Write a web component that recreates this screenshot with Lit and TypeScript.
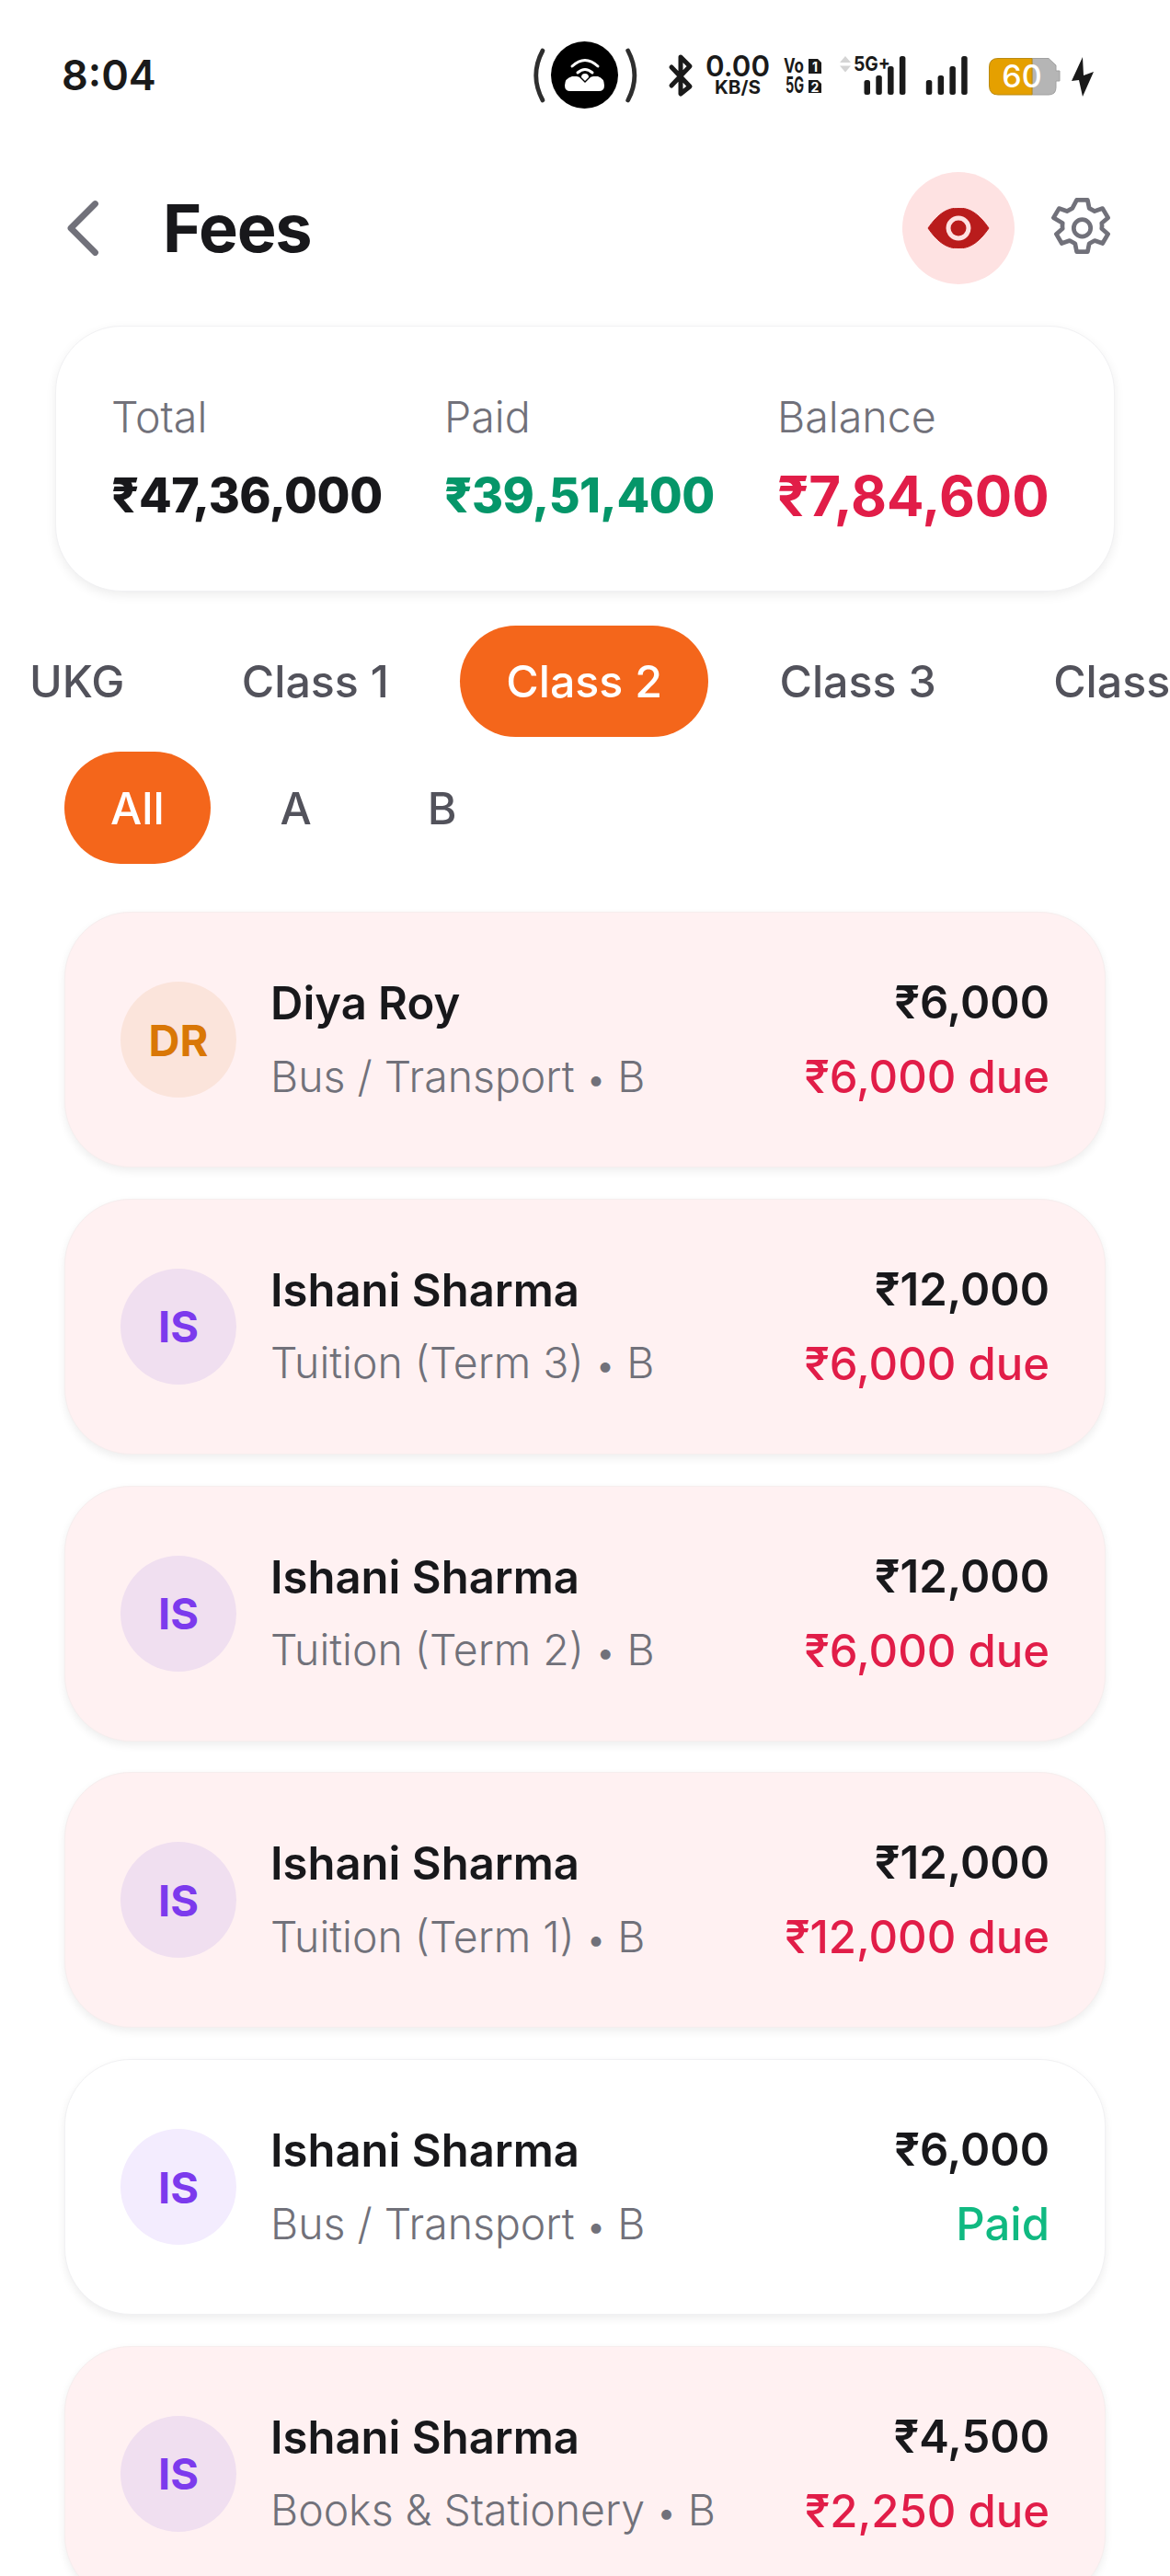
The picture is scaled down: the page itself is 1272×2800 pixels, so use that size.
import { LitElement, html, css, svg } from "lit";
import { customElement } from "lit/decorators.js";
import { classMap } from "lit/directives/class-map.js";

interface Fee { ini: string; name: string; sub: string; amt: string; due: string; paid?: boolean; tone: string }

const fees: Fee[] = [
  { ini: "DR", name: "Diya Roy", sub: "Bus / Transport", amt: "₹6,000", due: "₹6,000 due", tone: "orange" },
  { ini: "IS", name: "Ishani Sharma", sub: "Tuition (Term 3)", amt: "₹12,000", due: "₹6,000 due", tone: "violet" },
  { ini: "IS", name: "Ishani Sharma", sub: "Tuition (Term 2)", amt: "₹12,000", due: "₹6,000 due", tone: "violet" },
  { ini: "IS", name: "Ishani Sharma", sub: "Tuition (Term 1)", amt: "₹12,000", due: "₹12,000 due", tone: "violet" },
  { ini: "IS", name: "Ishani Sharma", sub: "Bus / Transport", amt: "₹6,000", due: "Paid", paid: true, tone: "violet" },
  { ini: "IS", name: "Ishani Sharma", sub: "Books & Stationery", amt: "₹4,500", due: "₹2,250 due", tone: "violet" },
];

const bars = (x: number) => {
  const tops = [87, 82, 72, 61];
  return [0, 1, 2, 3].map((i) => svg`<rect x=${x + i * 12.8} y=${tops[i]} width="6.5" height=${103 - tops[i]} rx="2.5" fill="#1a1a1a"/>`);
};

@customElement("app-root")
export class AppRoot extends LitElement {
  static styles = css`
    :host { display: block; width: 1272px; height: 2800px; overflow: hidden; background: #fff;
      font-family: Inter, "Noto Sans", sans-serif; color: #18181b; }
    .status { height: 164px; display: flex; justify-content: space-between; align-items: flex-start; }
    .time { margin: 60px 0 0 67px; font-size: 45px; line-height: 44px; font-weight: 600; color: #1a1a1a; }
    .status-icons { display: block; margin: 40px 72px 0 0; }
    .header { height: 168px; box-sizing: border-box; display: flex; align-items: center; padding: 0 60px 0 70px; }
    .back { display: block; width: 40px; height: 64px; }
    .title { margin: 0 0 0 67px; font-size: 72px; line-height: 80px; font-weight: 700; letter-spacing: -1.2px; flex: 1; }
    .eye-btn { width: 122px; height: 122px; border-radius: 50%; background: #fee2e2; display: flex; align-items: center; justify-content: center; }
    .gear { display: block; width: 71px; height: 71px; margin-left: 38px; }
    .summary { margin: 22px 60px 0; height: 289px; box-sizing: border-box; border-radius: 72px; background: #fff;
      border: 1px solid #f1f1f3; box-shadow: 0 4px 12px rgba(0,0,0,.07); display: grid; grid-template-columns: repeat(3, 362px);
      padding: 0 0 0 60px; align-content: center; }
    .sum-label { font-size: 46.6px; line-height: 60px; font-weight: 350; color: #71717a; }
    .sum-value { font-size: 52px; line-height: 72px; height: 72px; margin-top: 20px; font-weight: 800; white-space: nowrap; letter-spacing: -0.45px; }
    .green { color: #059669; }
    .red { color: #e11d48; }
    .big { font-size: 60px; font-weight: 700; letter-spacing: 0; }
    .tabs { display: flex; gap: 27.5px; margin: 37px 0 0 -18px; height: 121px; white-space: nowrap; }
    .chips { display: flex; gap: 26px; margin: 16px 0 0 70px; height: 122px; }
    .pill { display: flex; align-items: center; padding: 0 50px; border-radius: 61px; font-size: 48.3px; font-weight: 500; color: #52525b; }
    .pill.on { background: #f4661b; color: #fff; }
    .list { margin: 52px 70px 0; display: flex; flex-direction: column; gap: 33.75px; }
    .card { height: 278px; box-sizing: border-box; border-radius: 72px; background: #fff; border: 1px solid #f1f1f3;
      box-shadow: 0 4px 10px rgba(0,0,0,.07); display: flex; align-items: center; padding: 0 60px 0 60px; flex: none; }
    .card.due { background: #fff1f2; border-color: #f6eeee; }
    .avatar { width: 126px; height: 126px; border-radius: 50%; display: flex; align-items: center; justify-content: center;
      font-size: 47px; font-weight: 700; flex: none; margin-right: 37px; }
    .avatar.violet { background: #f3ecfe; color: #7c3aed; }
    .due .avatar.violet { background: #f0dff0; }
    .avatar.orange { background: #fbe4db; color: #d97706; }
    .text { flex: 1; min-width: 0; padding-top: 3.5px; }
    .name { font-size: 49px; line-height: 60px; font-weight: 600; }
    .sub { font-size: 46.4px; line-height: 60px; margin-top: 18.5px; font-weight: 350; color: #71717a; white-space: nowrap; }
    .dot { font-size: 40px; margin: 0 -1px; }
    .right { text-align: right; padding-top: 1px; }
    .amt { font-size: 49px; line-height: 60px; font-weight: 600; }
    .due-text { font-size: 49px; line-height: 60px; margin-top: 21px; font-weight: 500; color: #e11d48; white-space: nowrap; }
    .due-text.paid { color: #10b981; }
  `;

  private statusIcons() {
    return html`<svg class="status-icons" width="630" height="90" viewBox="570 40 630 90" font-family="Inter, sans-serif" fill="#1a1a1a">
      <path d="M590 55 Q575.5 82 590 109 M682.7 55 Q697 82 682.7 109" fill="none" stroke="#2e2e2e" stroke-width="4.8" stroke-linecap="round"/>
      <ellipse cx="635.5" cy="81.5" rx="36.5" ry="36.5" fill="#000"/>
      <path d="M620 99 Q614 99 614 93 Q614 85 622 83 L627 83 Q630 83 632 86 L636 90 L640 86 Q642 83 645 83 L650 83 Q657 85 657 93 Q657 99 651 99 Z" fill="#fff"/>
      <path d="M622 72 Q636 59 650 72 M628 79 Q636 72 644 79" fill="none" stroke="#fff" stroke-width="3" stroke-linecap="round"/>
      <path d="M632 84 a4 4 0 1 1 8 0 l-4 4 z" fill="#fff"/>
      <path d="M730 73 L750 94 L740 102 V62 L750 72 L730 93" fill="none" stroke="#1a1a1a" stroke-width="5" stroke-linejoin="round" stroke-linecap="round"/>
      <text x="767" y="83" font-size="31" font-weight="600" textLength="70" lengthAdjust="spacingAndGlyphs">0.00</text>
      <text x="777" y="102" font-size="19.5" font-weight="700" textLength="50" lengthAdjust="spacingAndGlyphs">KB/S</text>
      <text x="852" y="79" font-size="21" font-weight="700" textLength="22" lengthAdjust="spacingAndGlyphs">Vo</text>
      <text x="854" y="101" font-size="24" font-weight="700" textLength="20" lengthAdjust="spacingAndGlyphs">5G</text>
      <path d="M879 64 H889 L893 68 V80 H879 Z"/><path d="M879 87 H889 L893 91 V101 H879 Z"/>
      <text x="886" y="78" font-size="14" font-weight="700" fill="#fff" text-anchor="middle">1</text>
      <text x="886" y="99.5" font-size="14" font-weight="700" fill="#fff" text-anchor="middle">2</text>
      <path d="M919 61 l6 7 h-12 z" fill="#d4d4d4"/><path d="M919 78.5 l6 -7 h-12 z" fill="#d4d4d4"/>
      <text x="928" y="77" font-size="22" font-weight="700" textLength="40" lengthAdjust="spacingAndGlyphs">5G+</text>
      ${bars(939.5)}
      ${bars(1006.8)}
      <path d="M1122 63.5 H1140 L1148 71 V77 H1152 V88 H1148 V95 Q1148 103 1140 103 H1122 Z" fill="#b5b5b5" stroke="#a0a0a0" stroke-width="1"/>
      <path d="M1122 63.5 H1085 Q1075.5 63.5 1075.5 73 V93 Q1075.5 103 1085 103 H1122 Z" fill="#e5a000" stroke="#b98a12" stroke-width="1"/>
      <text x="1111" y="95" font-size="34" font-weight="500" fill="#fff" text-anchor="middle">60</text>
      <path d="M1177 62 L1165 88 L1173 87 L1177 105 L1189 78 L1178 82 Z"/>
    </svg>`;
  }

  render() {
    return html`
      <div class="status"><div class="time">8:04</div>${this.statusIcons()}</div>
      <div class="header">
        <svg class="back" viewBox="0 0 40 64"><path d="M33.5 5.5 L7 32 L33.5 58.5" fill="none" stroke="#71717a" stroke-width="6.8" stroke-linecap="round" stroke-linejoin="round"/></svg>
        <h1 class="title">Fees</h1>
        <div class="eye-btn">
          <svg width="68" height="44" viewBox="0 0 68 44">
            <path d="M1 22 C12 6 22 0 34 0 C46 0 56 6 67 22 C56 38 46 44 34 44 C22 44 12 38 1 22 Z" fill="#b91c1c" stroke="#b91c1c" stroke-linejoin="round"/>
            <circle cx="34" cy="22" r="11" fill="#b91c1c" stroke="#fee2e2" stroke-width="5"/>
          </svg>
        </div>
        <svg class="gear" viewBox="0 0 24 24" fill="none" stroke="#71717a" stroke-width="1.6" stroke-linejoin="round">
          <path d="M10 1.5h4l.6 3 2 1.1 2.9-1 2 3.4-2.3 2c.1.7.1 1.3 0 2l2.3 2-2 3.4-2.9-1-2 1.1-.6 3h-4l-.6-3-2-1.1-2.9 1-2-3.4 2.3-2c-.1-.7-.1-1.3 0-2L1.5 8l2-3.4 2.9 1 2-1.1z"/>
          <circle cx="12" cy="11.8" r="3.1"/>
        </svg>
      </div>
      <div class="summary">
        <div><div class="sum-label">Total</div><div class="sum-value">₹47,36,000</div></div>
        <div><div class="sum-label">Paid</div><div class="sum-value green">₹39,51,400</div></div>
        <div><div class="sum-label">Balance</div><div class="sum-value red big">₹7,84,600</div></div>
      </div>
      <div class="tabs">
        ${["UKG", "Class 1", "Class 2", "Class 3", "Class 4"].map((t) => html`<div class=${classMap({ pill: true, on: t === "Class 2" })}>${t}</div>`)}
      </div>
      <div class="chips">
        ${["All", "A", "B"].map((t) => html`<div class=${classMap({ pill: true, on: t === "All" })}>${t}</div>`)}
      </div>
      <div class="list">
        ${fees.map((f) => html`
          <div class=${classMap({ card: true, due: !f.paid })}>
            <div class="avatar ${f.tone}">${f.ini}</div>
            <div class="text"><div class="name">${f.name}</div><div class="sub">${f.sub} <span class="dot">•</span> B</div></div>
            <div class="right"><div class="amt">${f.amt}</div><div class=${classMap({ "due-text": true, paid: !!f.paid })}>${f.due}</div></div>
          </div>`)}
      </div>
    `;
  }
}
